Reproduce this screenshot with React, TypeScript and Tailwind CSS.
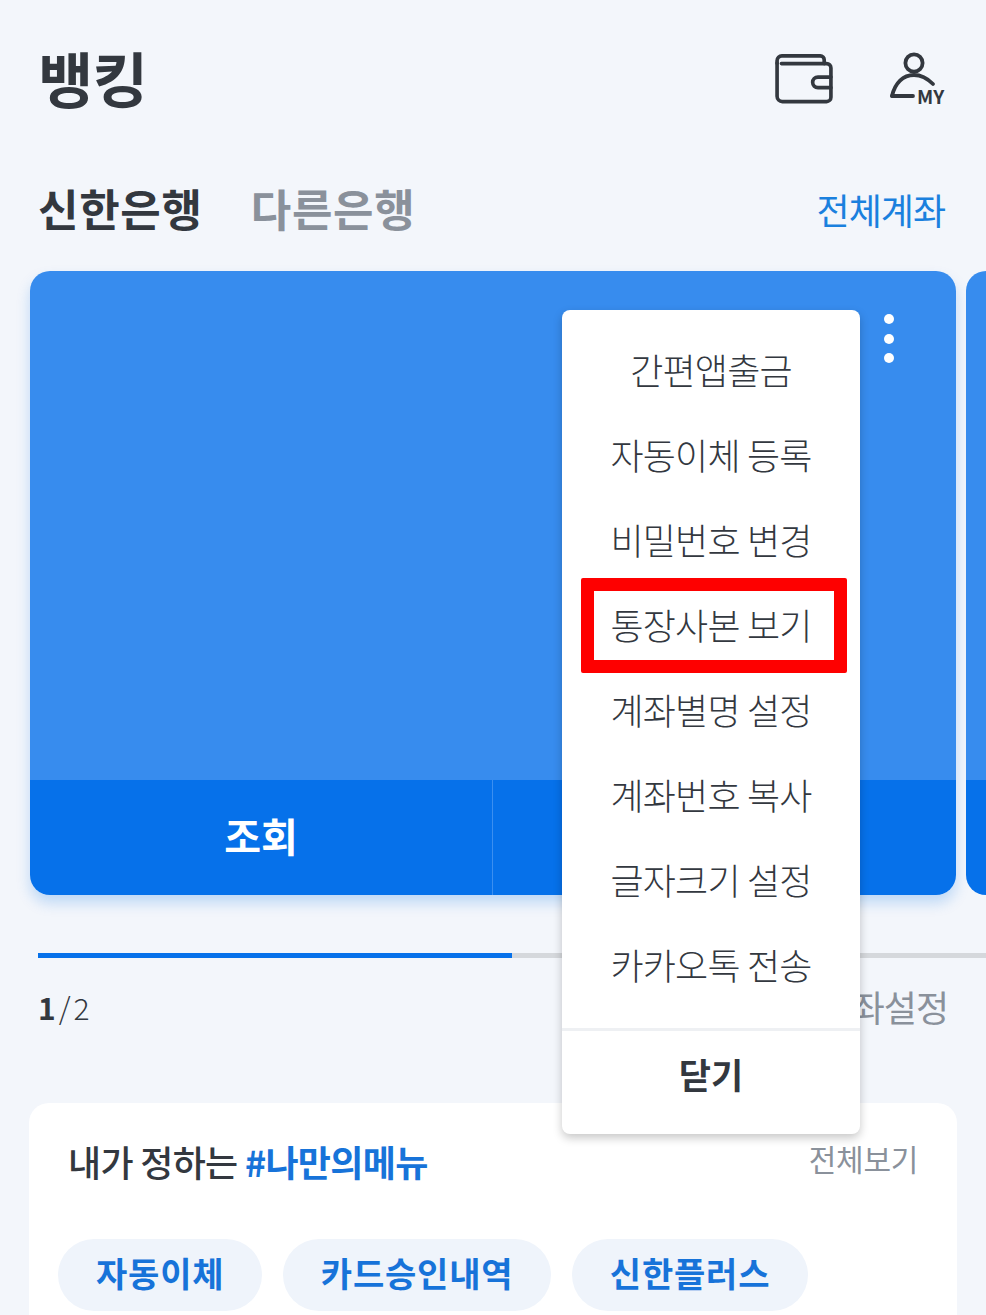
const font = { fontFamily: '"Noto Sans CJK KR", "Noto Sans", sans-serif' };

const menuItems = [
  '간편앱출금',
  '자동이체 등록',
  '비밀번호 변경',
  '통장사본 보기',
  '계좌별명 설정',
  '계좌번호 복사',
  '글자크기 설정',
  '카카오톡 전송',
];

const WalletIcon = () => (
  <svg width="58" height="50" viewBox="0 0 60 52" fill="none" stroke="#33383f" strokeWidth="3.8" strokeLinejoin="round" strokeLinecap="round">
    <path d="M2 9.5V44a5.5 5.5 0 0 0 5.5 5.5h46A4.5 4.5 0 0 0 58 45V14.5a4.5 4.5 0 0 0-4.5-4.5H6.5" />
    <path d="M2 9.5V7a5 5 0 0 1 5-5h40a4 4 0 0 1 4 4v4" />
    <path d="M58 24H44.5a4.5 4.5 0 0 0 0 11H58" />
  </svg>
);

const MyIcon = () => (
  <div className="relative h-[52px] w-[58px]">
    <svg className="overflow-visible" width="58" height="52" viewBox="0 0 58 52" fill="none" stroke="#33383f" strokeWidth="3.8" strokeLinecap="round">
      <circle cx="25" cy="10" r="8.6" />
      <path d="M3 43C6 30 14 22 25 22c7 0 13 3 19 9" />
      <path d="M3 43h21" />
    </svg>
    <span className="absolute left-[28px] top-[33px] text-[19px] font-bold leading-[20px] text-[#33383f]">MY</span>
  </div>
);

export default function App() {
  return (
    <div style={font} className="relative h-[1315px] w-[986px] overflow-hidden bg-[#f3f6fb]">
      {/* Header */}
      <div className="flex h-[158px] items-center justify-between pl-[38px] pr-[39px]">
        <h1 className="pb-[4px] text-[60px] font-bold leading-none tracking-[-0.5px] text-[#33383f]">뱅킹</h1>
        <div className="flex items-center gap-[56px]">
          <WalletIcon />
          <MyIcon />
        </div>
      </div>

      {/* Tabs */}
      <div className="flex h-[113px] items-start justify-between pl-[38px] pr-[41px] pt-[22px]">
        <div className="flex gap-[48px] text-[44px] font-bold leading-[56px] tracking-[0.7px]">
          <span className="text-[#33383f]">신한은행</span>
          <span className="text-[#8a919b]">다른은행</span>
        </div>
        <span className="-mt-px text-[36px] leading-[60px] tracking-[-1px] text-[#1a80de]">전체계좌</span>
      </div>

      {/* Account cards */}
      <div className="flex gap-[10px] pl-[30px]">
        <div className="flex h-[624px] w-[926px] shrink-0 flex-col overflow-hidden rounded-[20px] shadow-[0_8px_14px_rgba(6,113,234,0.22)]">
          <div className="relative flex-1 bg-[#378cee]">
            <div className="absolute right-[62px] top-[43px] flex flex-col gap-[9.5px]">
              <span className="h-[10px] w-[10px] rounded-full bg-white" />
              <span className="h-[10px] w-[10px] rounded-full bg-white" />
              <span className="h-[10px] w-[10px] rounded-full bg-white" />
            </div>
          </div>
          <div className="flex h-[115px] bg-[#0671ea]">
            <div className="flex w-[463px] items-center justify-center border-r border-[#3b8ff0] pb-[6px] text-[40px] font-bold text-white">조회</div>
            <div className="flex-1" />
          </div>
        </div>
        <div className="flex h-[624px] w-[926px] shrink-0 flex-col overflow-hidden rounded-[20px]">
          <div className="flex-1 bg-[#378cee]" />
          <div className="h-[115px] bg-[#0671ea]" />
        </div>
      </div>

      {/* Progress */}
      <div className="ml-[38px] mt-[58px] h-[5px] bg-[#d5d8dc]">
        <div className="h-[5px] w-[474px] bg-[#0671ea]" />
      </div>
      <div className="flex h-[145px] items-start justify-between pl-[38px] pr-[38px] pt-[21px]">
        <div className="-mt-[2px] flex text-[30px] leading-[60px] text-[#33383f]">
          <span className="font-bold">1</span>
          <span className="mx-[3px] font-light">/</span>
          <span className="font-light">2</span>
        </div>
        <span className="text-[36px] leading-[54px] tracking-[-1px] text-[#8a919b]">계좌설정</span>
      </div>

      {/* My menu panel */}
      <div className="mx-[29px] h-[300px] rounded-[20px] bg-white pl-[29px] pr-[39px] pt-[31px]">
        <div className="flex items-start justify-between">
          <div className="pl-[10px] text-[36px] font-medium leading-[54px] tracking-[-0.7px] text-[#33383f]">
            내가 정하는 <span className="font-bold text-[#1773d9]">#나만의메뉴</span>
          </div>
          <span className="text-[30px] leading-[48px] tracking-[-0.3px] text-[#8a919b]">전체보기</span>
        </div>
        <div className="mt-[51px] flex gap-[20.5px]">
          {['자동이체', '카드승인내역', '신한플러스'].map((chip) => (
            <span key={chip} className="flex h-[72px] items-center rounded-full bg-[#eff4fb] px-[38px] pb-[5px] text-[34px] font-bold tracking-[0.8px] text-[#1773d9]">
              {chip}
            </span>
          ))}
        </div>
      </div>

      {/* Popup menu */}
      <div className="absolute left-[562px] top-[310px] h-[824px] w-[298px] rounded-[8px] bg-white shadow-[0_4px_10px_rgba(0,0,0,0.22)]">
        <div className="flex h-[718px] flex-col pt-[16px]">
          {menuItems.map((item) => (
            <div key={item} className="flex h-[85px] items-center justify-center whitespace-nowrap text-[36px] font-light tracking-[-0.8px] text-[#33383f]">
              {item}
            </div>
          ))}
        </div>
        <div className="flex h-[106px] items-center justify-center border-t-[3px] border-[#eef0f3] pb-[16px] text-[35px] font-bold text-[#33383f]">닫기</div>
      </div>

      {/* Red highlight */}
      <div className="absolute left-[581px] top-[578px] h-[95px] w-[266px] rounded-[2px] border-[13px] border-[#fe0000]" />
    </div>
  );
}
